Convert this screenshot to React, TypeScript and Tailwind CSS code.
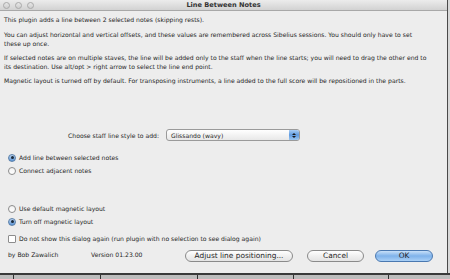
import React from "react";

function Radio({ checked, label }: { checked?: boolean; label: string }) {
  return (
    <div className="flex items-center h-[13px] pl-[8px]">
      {checked ? (
        <span className="w-[8px] h-[8px] rounded-full border border-[#5a7fa8] bg-gradient-to-b from-[#bcd6f2] to-[#5b95d6] flex items-center justify-center">
          <span className="w-[3px] h-[3px] rounded-full bg-[#1b2a3a]"></span>
        </span>
      ) : (
        <span className="w-[8px] h-[8px] rounded-full border border-[#8c8c8c] bg-gradient-to-b from-[#f2f2f2] to-white"></span>
      )}
      <span className="ml-[3px]">{label}</span>
    </div>
  );
}

function Button({ label, primary, w }: { label: string; primary?: boolean; w: string }) {
  return (
    <div
      className={
        "h-[12px] rounded-full border flex items-center justify-center text-[7.4px] " +
        w +
        (primary
          ? " border-[#4a78b0] bg-gradient-to-b from-[#c8e0f8] via-[#7fb2ea] to-[#aad0f6]"
          : " border-[#8a8a8a] bg-gradient-to-b from-white via-[#f0f0f0] to-[#e4e4e4]")
      }
    >
      {label}
    </div>
  );
}

export default function App() {
  return (
    <div className="w-[450px] h-[279px] overflow-hidden bg-[#c8c8c8] flex flex-col font-['DejaVu_Sans',sans-serif] text-[#1e1e1e]">
      <div className="flex h-[273px]">
        <div className="w-[447px] h-full bg-[#ededed] flex flex-col text-[6.1px] leading-[9px] whitespace-nowrap">
          <div className="h-[11px] shrink-0 bg-gradient-to-b from-[#ececec] to-[#d2d2d2] border-b border-[#a8a8a8] flex items-center relative">
            <div className="flex gap-[5px] pl-[3px]">
              <span className="w-[7px] h-[7px] rounded-full border border-[#a9a9a9] bg-gradient-to-b from-[#e6e6e6] to-[#cfcfcf]"></span>
              <span className="w-[7px] h-[7px] rounded-full border border-[#a9a9a9] bg-gradient-to-b from-[#e6e6e6] to-[#cfcfcf]"></span>
              <span className="w-[7px] h-[7px] rounded-full border border-[#a9a9a9] bg-gradient-to-b from-[#e6e6e6] to-[#cfcfcf]"></span>
            </div>
            <div className="flex-1 text-center text-[6.6px] font-bold text-[#333] -ml-[34px]">Line Between Notes</div>
          </div>
          <div className="px-[4px] pt-[4px]">
            <p>This plugin adds a line between 2 selected notes (skipping rests).</p>
            <p className="mt-[6px]">
              You can adjust horizontal and vertical offsets, and these values are remembered across Sibelius sessions. You should only have to set
              <br />
              these up once.
            </p>
            <p className="mt-[5px]">
              If selected notes are on multiple staves, the line will be added only to the staff when the line starts; you will need to drag the other end to
              <br />
              its destination. Use alt/opt &gt; right arrow to select the line end point.
            </p>
            <p className="mt-[5px]">
              Magnetic layout is turned off by default. For transposing instruments, a line added to the full score will be repositioned in the parts.
            </p>
          </div>
          <div className="flex items-center mt-[44px]">
            <div className="w-[159px] text-right">Choose staff line style to add:</div>
            <div className="ml-[7px] w-[134px] h-[12px] rounded-[3px] border border-[#9a9a9a] bg-gradient-to-b from-white to-[#e8e8e8] flex items-center">
              <span className="flex-1 pl-[4px]">Glissando (wavy)</span>
              <span className="w-[10px] h-full rounded-r-[2px] bg-gradient-to-b from-[#a9cdf3] via-[#5f9be0] to-[#9cc6f0] flex flex-col items-center justify-center gap-[1px]">
                <svg width="4" height="2" viewBox="0 0 4 2"><path d="M0 2 L2 0 L4 2 Z" fill="#1a1a1a" /></svg>
                <svg width="4" height="2" viewBox="0 0 4 2"><path d="M0 0 L2 2 L4 0 Z" fill="#1a1a1a" /></svg>
              </span>
            </div>
          </div>
          <div className="mt-[10px]">
            <Radio checked label="Add line between selected notes" />
            <Radio label="Connect adjacent notes" />
          </div>
          <div className="mt-[25px]">
            <Radio label="Use default magnetic layout" />
            <Radio checked label="Turn off magnetic layout" />
          </div>
          <div className="flex items-center h-[13px] pl-[8px] mt-[4px]">
            <span className="w-[8px] h-[8px] rounded-[1px] border border-[#8c8c8c] bg-white"></span>
            <span className="ml-[3px]">Do not show this dialog again (run plugin with no selection to see dialog again)</span>
          </div>
          <div className="flex items-center mt-[4px] h-[13px]">
            <span className="pl-[8px] w-[91px] -mt-[3px]">by Bob Zawalich</span>
            <span className="w-[94px] -mt-[3px]">Version 01.23.00</span>
            <Button label="Adjust line positioning..." w="w-[108px]" />
            <div className="w-[14px]"></div>
            <Button label="Cancel" w="w-[57px]" />
            <div className="w-[11px]"></div>
            <Button primary label="OK" w="w-[58px]" />
          </div>
        </div>
        <div className="w-[1px] bg-[#4a4a4a]"></div>
        <div className="flex-1 bg-[#d8d8d8]"></div>
      </div>
      <div className="flex-1 border-t-2 border-[#3a3a3a] bg-[#bdbdbd] flex">
        <div className="w-[13px]"></div>
        <div className="w-[87px] border-l border-[#333]"></div>
        <div className="w-[97px] border-l border-[#333]"></div>
        <div className="w-[96px] border-l border-[#333]"></div>
        <div className="w-[95px] border-l border-[#333]"></div>
        <div className="flex-1 border-l border-[#333]"></div>
      </div>
    </div>
  );
}
